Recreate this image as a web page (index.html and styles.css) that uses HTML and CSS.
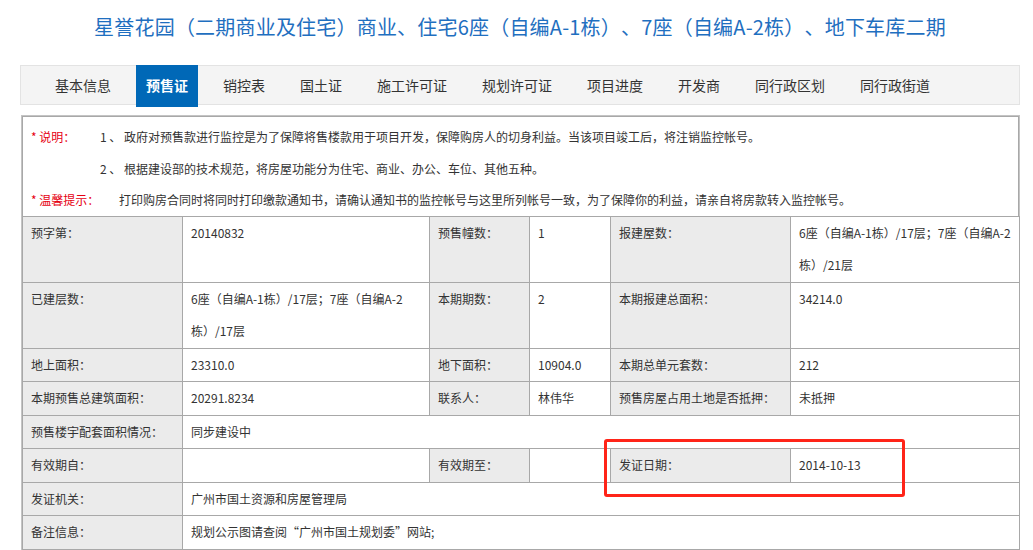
FILE: index.html
```html
<!DOCTYPE html>
<html lang="zh-CN">
<head>
<meta charset="utf-8">
<title>预售证</title>
<link rel="stylesheet" href="styles.css">
</head>
<body>
<div class="page">
  <h1 class="title">星誉花园（二期商业及住宅）商业、住宅6座（自编A-1栋）、7座（自编A-2栋）、地下车库二期</h1>
  <ul class="tabs">
    <li class="tab">基本信息</li>
    <li class="tab active">预售证</li>
    <li class="tab">销控表</li>
    <li class="tab">国土证</li>
    <li class="tab">施工许可证</li>
    <li class="tab">规划许可证</li>
    <li class="tab">项目进度</li>
    <li class="tab">开发商</li>
    <li class="tab">同行政区划</li>
    <li class="tab">同行政街道</li>
  </ul>
  <div class="box">
    <div class="notes">
      <div class="note-row"><span class="note-label"><span class="red">* 说明：</span></span><span>1 、 政府对预售款进行监控是为了保障将售楼款用于项目开发，保障购房人的切身利益。当该项目竣工后，将注销监控帐号。</span></div>
      <div class="note-row"><span class="note-label"></span><span>2 、 根据建设部的技术规范，将房屋功能分为住宅、商业、办公、车位、其他五种。</span></div>
      <div class="note-row"><span class="note-label wide"><span class="red">* 温馨提示：</span></span><span>打印购房合同时将同时打印缴款通知书，请确认通知书的监控帐号与这里所列帐号一致，为了保障你的利益，请亲自将房款转入监控帐号。</span></div>
    </div>
    <table class="info">
      <colgroup>
        <col class="c1"><col class="c2"><col class="c3"><col class="c4"><col class="c5"><col class="c6">
      </colgroup>
      <tr>
        <th>预字第：</th><td class="v2">20140832</td>
        <th>预售幢数：</th><td>1</td>
        <th>报建屋数：</th><td class="v6">6座（自编A-1栋）/17层；7座（自编A-2栋）/21层</td>
      </tr>
      <tr>
        <th>已建层数：</th><td class="v2">6座（自编A-1栋）/17层；7座（自编A-2栋）/17层</td>
        <th>本期期数：</th><td>2</td>
        <th>本期报建总面积：</th><td class="v6">34214.0</td>
      </tr>
      <tr>
        <th>地上面积：</th><td class="v2">23310.0</td>
        <th>地下面积：</th><td>10904.0</td>
        <th>本期总单元套数：</th><td class="v6">212</td>
      </tr>
      <tr>
        <th>本期预售总建筑面积：</th><td class="v2">20291.8234</td>
        <th>联系人：</th><td>林伟华</td>
        <th>预售房屋占用土地是否抵押：</th><td class="v6">未抵押</td>
      </tr>
      <tr>
        <th>预售楼宇配套面积情况：</th><td colspan="5">同步建设中</td>
      </tr>
      <tr>
        <th>有效期自：</th><td class="v2"></td>
        <th>有效期至：</th><td></td>
        <th>发证日期：</th><td class="v6">2014-10-13</td>
      </tr>
      <tr>
        <th>发证机关：</th><td colspan="5">广州市国土资源和房屋管理局</td>
      </tr>
      <tr>
        <th>备注信息：</th><td colspan="5">规划公示图请查阅“广州市国土规划委”网站;</td>
      </tr>
    </table>
  </div>
  <div class="highlight"></div>
</div>
</body>
</html>
```

FILE: styles.css
```css
html, body {
  margin: 0;
  padding: 0;
  background: #ffffff;
}

body {
  font-family: "Noto Sans CJK SC", "Noto Sans", sans-serif;
  color: #333333;
  font-size: 12px;
  text-spacing-trim: space-all;
}

.page {
  position: relative;
  width: 1000px;
  margin-left: 20px;
}

.title {
  margin: 0 0 23px;
  padding-top: 12px;
  font-size: 20px;
  line-height: 30px;
  font-weight: normal;
  letter-spacing: 0.2px;
  color: #1f6fc0;
  text-align: center;
  white-space: nowrap;
}

.tabs {
  display: flex;
  align-items: flex-start;
  list-style: none;
  margin: 0;
  padding: 0 0 0 16px;
  height: 40px;
  box-sizing: border-box;
  background: #f4f4f4;
  border: 1px solid #e3e3e3;
}

.tab {
  margin: 0 7px 0 8px;
  padding: 0 10px;
  font-size: 14px;
  line-height: 38px;
  color: #333333;
  white-space: nowrap;
}

.tab.active {
  margin-top: -1px;
  height: 42px;
  line-height: 40px;
  background: #0068b7;
  color: #ffffff;
  font-weight: bold;
}

.box {
  margin: 10px 0 0 1px;
  width: 999px;
  box-sizing: border-box;
  border: 1px solid #c4c4c4;
}

.notes {
  border: 1px solid #a8a8a8;
  border-bottom: 0;
  padding: 4px 0 0 8px;
  line-height: 31.5px;
}

.note-row {
  display: flex;
  white-space: nowrap;
}

.note-label {
  flex: none;
  width: 69px;
}

.note-label.wide {
  width: 88px;
}

.red {
  color: #e60012;
}

.info {
  width: 997px;
  border-collapse: collapse;
  table-layout: fixed;
}

.c1 { width: 160px; }
.c2 { width: 247px; }
.c3 { width: 100px; }
.c4 { width: 81px; }
.c5 { width: 180px; }
.c6 { width: 229px; }

.info th,
.info td {
  border: 1px solid #a8a8a8;
  padding: 0 2px 0 8px;
  vertical-align: top;
  text-align: left;
  line-height: 32.5px;
  font-size: 12px;
  font-weight: normal;
  color: #333333;
}

.info th {
  background: #ebebeb;
  white-space: nowrap;
}

.info td.v2 {
  padding-right: 22px;
}

.info td.v6 {
  padding-right: 0;
}

.highlight {
  position: absolute;
  left: 584px;
  top: 439px;
  width: 301px;
  height: 58px;
  box-sizing: border-box;
  border: 3px solid #ff2418;
  border-radius: 3px;
}
```
